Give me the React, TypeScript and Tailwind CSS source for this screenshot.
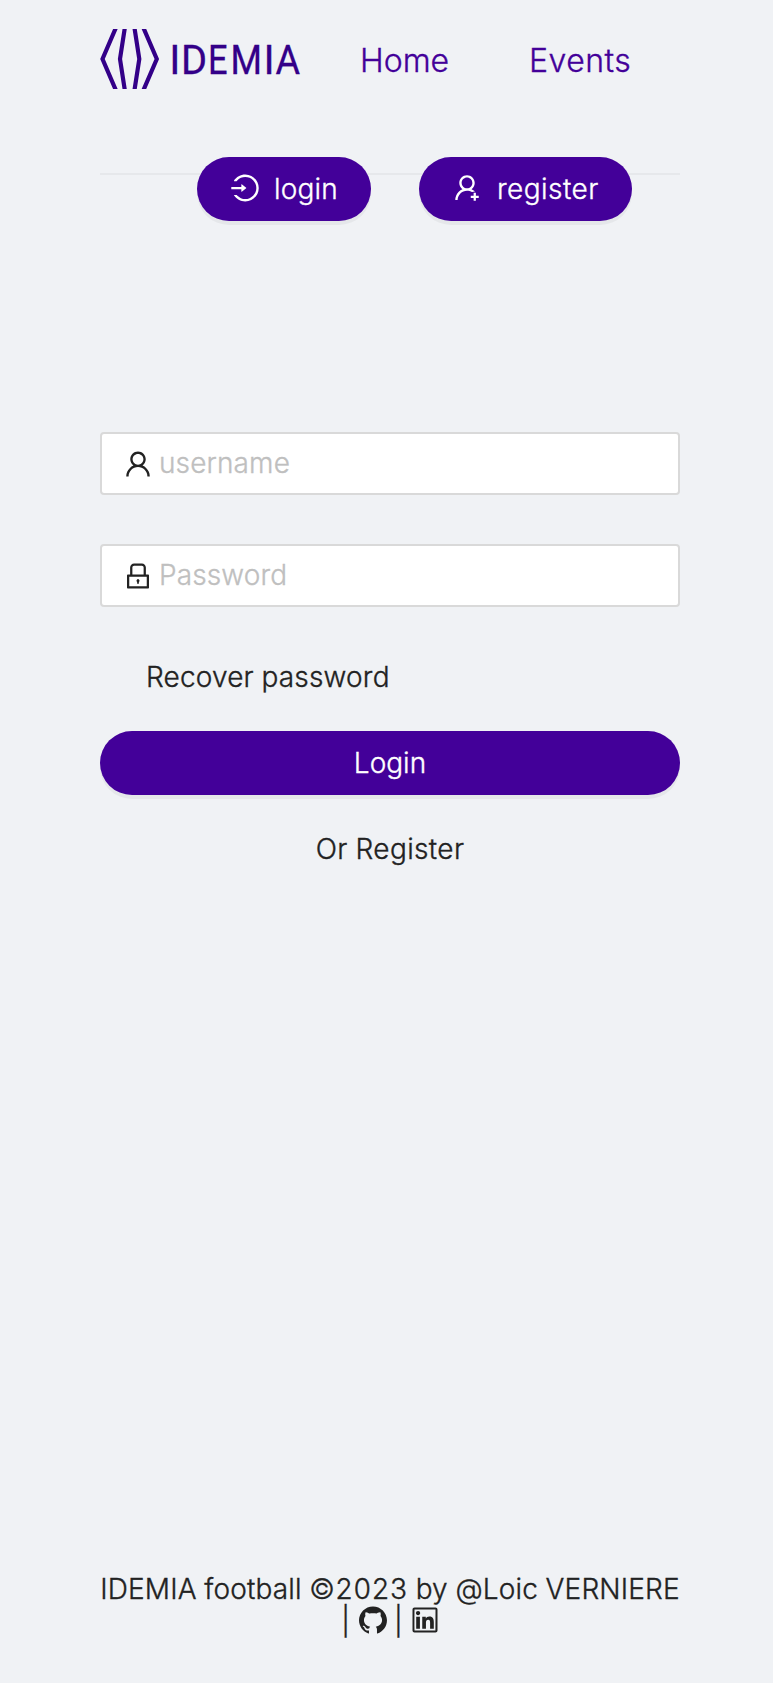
import {
  AiFillGithub,
  AiOutlineLinkedin,
  AiOutlineLock,
  AiOutlineLogin,
  AiOutlineUser,
  AiOutlineUserAdd,
} from 'react-icons/ai';
import type { ReactNode } from 'react';

const iconBox = '64 64 896 896';

// Each wordmark letter: glyph, x offset, horizontal scale
const wordmark: [string, number, number][] = [
  ['I', 69.2, 1],
  ['D', 80.9, 0.97],
  ['E', 107.9, 0.84],
  ['M', 130.5, 0.88],
  ['I', 163.5, 1],
  ['A', 175.5, 0.92],
];

function Logo() {
  return (
    <svg className="mt-[29px] h-[60px] w-[202px] shrink-0" viewBox="0 0 202 60" role="img" aria-label="IDEMIA">
      <g fill="none" stroke="#330088" strokeWidth="4.2">
        <path d="M15.8 -1 L2.5 30 L15.8 61" />
        <path d="M24.8 -1 L20 30 L24.8 61" />
        <path d="M34.5 -1 L39.3 30 L34.5 61" />
        <path d="M43.5 -1 L56.8 30 L43.5 61" />
      </g>
      <g fontFamily="Roboto, sans-serif" fontSize="41" fontWeight="400" fill="#330088" stroke="#330088" strokeWidth="0.3">
        {wordmark.map(([glyph, x, scale]) => (
          <text key={x} transform={`translate(${x} 44.5) scale(${scale} 1)`}>
            {glyph}
          </text>
        ))}
      </g>
    </svg>
  );
}

function PillButton({ children, className }: { children: ReactNode; className: string }) {
  return (
    <button
      type="button"
      className={`flex h-16 shrink-0 items-center rounded-full bg-[#430099] text-white shadow-[0_4px_0_rgba(0,0,0,0.045)] ${className}`}
    >
      {children}
    </button>
  );
}

function Field({ icon, placeholder, type }: { icon: ReactNode; placeholder: string; type: string }) {
  return (
    <label className="flex h-[63px] items-center gap-[7px] rounded-[4px] border-2 border-[#d9d9d9] bg-white pl-[22px]">
      {icon}
      <input
        type={type}
        placeholder={placeholder}
        className="min-w-0 flex-1 bg-transparent pb-0.5 leading-[42px] tracking-[0.12px] outline-none placeholder:text-[#bfbfbf]"
      />
    </label>
  );
}

export default function App() {
  return (
    <div className="flex h-[1683px] flex-col bg-[#f0f2f5] pr-[93px] pl-[100px] font-['Inter',sans-serif] text-[28px] leading-[44px] font-light text-[#222222] tabular-nums [-webkit-text-stroke-width:0.35px]">
      <header className="h-[175px] shrink-0 border-b-2 border-[#e6e8eb]">
        <div className="flex h-[157px] items-start">
          <Logo />
          <nav className="flex pt-[39px] text-[32px] text-[#430099]">
            <a className="ml-[58px] w-[169px]">Home</a>
            <a className="tracking-[0.5px]">Events</a>
          </nav>
        </div>
        <div className="flex gap-12 pl-[97px]">
          <PillButton className="w-[174px] gap-[15px] pl-[34px]">
            <AiOutlineLogin viewBox={iconBox} className="mb-0.5 size-7" />
            <span className="tracking-[0.2px]">login</span>
          </PillButton>
          <PillButton className="w-[213px] gap-4 pl-[34px]">
            <AiOutlineUserAdd viewBox={iconBox} className="mb-0.5 size-7" />
            <span className="tracking-[0.45px]">register</span>
          </PillButton>
        </div>
      </header>
      <main className="flex flex-1 flex-col pt-[257px]">
        <Field type="text" placeholder="username" icon={<AiOutlineUser viewBox={iconBox} className="size-7" />} />
        <div className="h-[49px]" />
        <Field type="password" placeholder="Password" icon={<AiOutlineLock viewBox={iconBox} className="size-7" />} />
        <a className="mt-[48px] pl-[46px] tracking-[0.17px]">Recover password</a>
        <div className="h-[32px]" />
        <PillButton className="w-full justify-center">Login</PillButton>
        <p className="mt-[32px] text-center tracking-[0.36px]">
          Or <a>Register</a>
        </p>
      </main>
      <footer className="flex h-[115px] shrink-0 flex-col items-center leading-8">
        <p className="mt-[5px] tracking-[0.14px] whitespace-nowrap">IDEMIA football ©2023 by @Loic VERNIERE</p>
        <div className="flex items-center gap-2">
          <span>|</span>
          <AiFillGithub viewBox={iconBox} className="mb-0.5 ml-px size-7" />
          <span className="-ml-px">|</span>
          <AiOutlineLinkedin viewBox={iconBox} className="mb-0.5 size-7" />
        </div>
      </footer>
    </div>
  );
}
